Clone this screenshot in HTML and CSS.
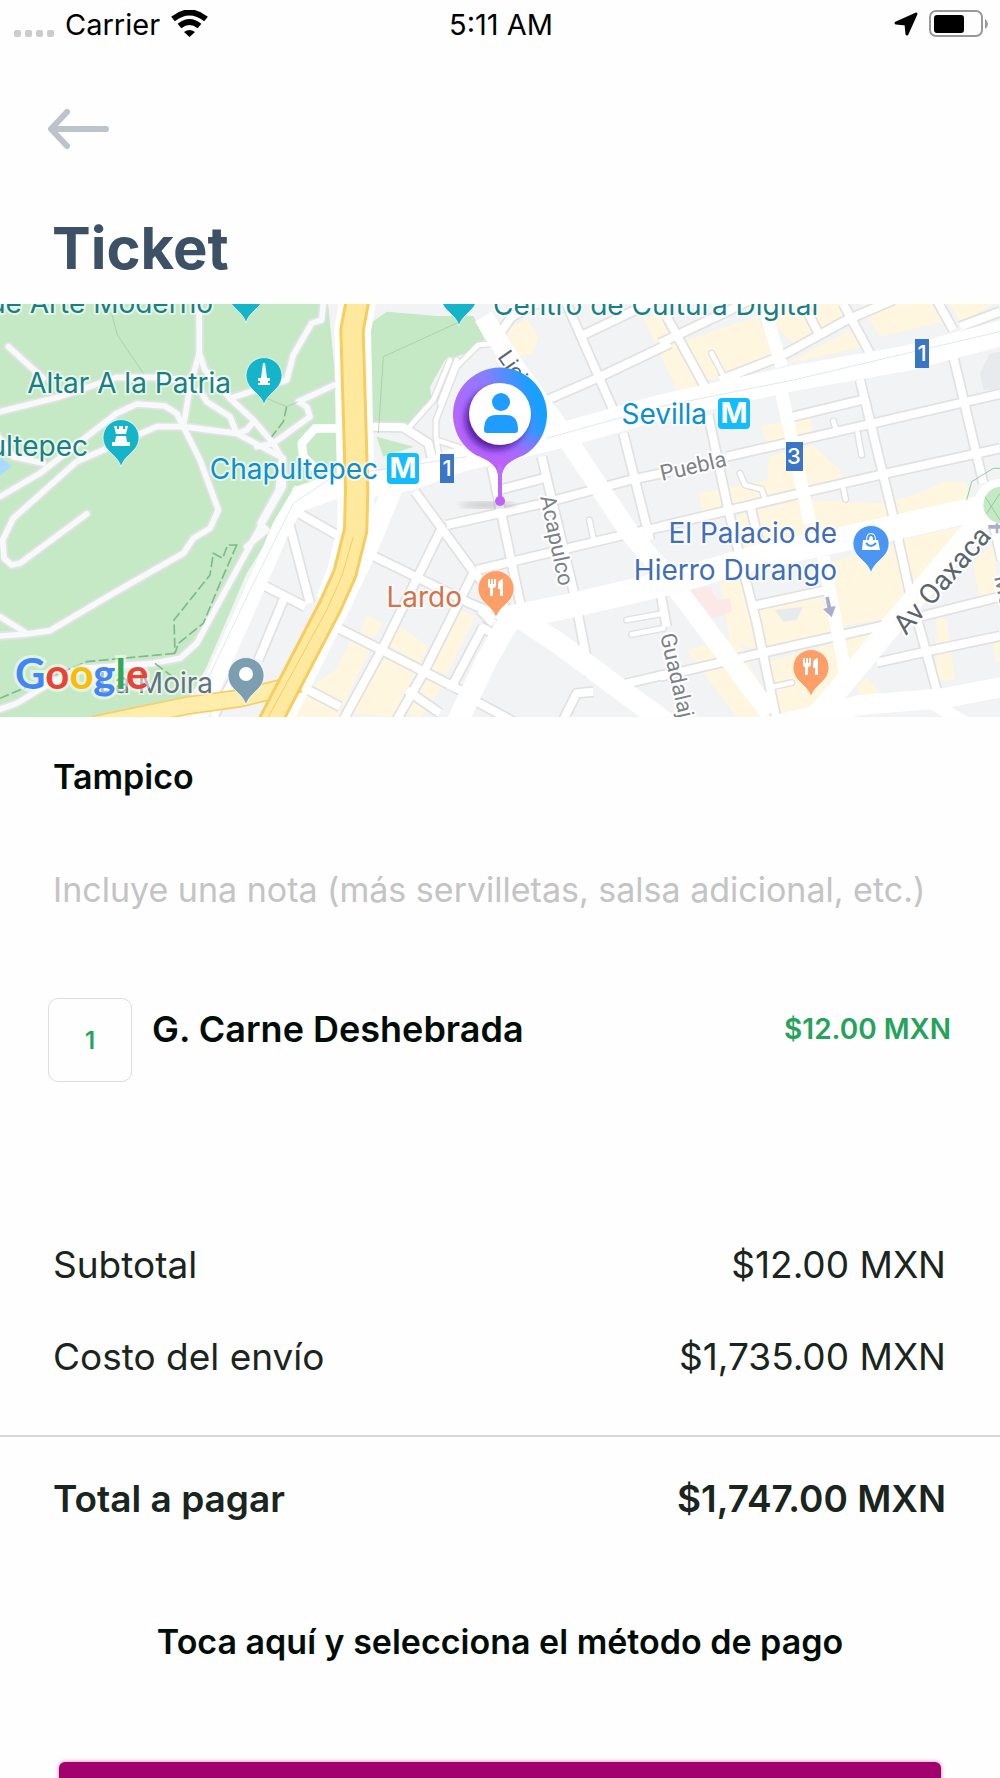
FILE: index.html
```
<!DOCTYPE html>
<html lang="es">
<head>
<meta charset="utf-8">
<meta name="viewport" content="width=device-width, initial-scale=1">
<title>Ticket</title>
<link rel="stylesheet" href="styles.css">
</head>
<body>

    <div id="screen">

        <div class="status-bar">
            <div class="status-left">
                <div class="signal"><i></i><i></i><i></i><i></i></div>
                <span>Carrier</span>
                <svg class="wifi" width="37" height="28" viewBox="0 0 37 28">
                    <path d="M2 9 Q18.500 -4 35 9" fill="none" stroke="#000" stroke-width="6"/>
                    <path d="M8.500 16 Q18.500 8 28.500 16" fill="none" stroke="#000" stroke-width="6"/>
                    <path d="M13 22 Q18.500 18 24 22 L18.500 27 Z"/>
                </svg>
            </div>
            <span class="time">5:11 AM</span>
            <div class="status-right">
                <svg width="24" height="24" viewBox="0 0 24 24">
                    <path d="M2 11 L22 2 L13 22 L12 12 Z" stroke="#000" stroke-width="3" stroke-linejoin="round"/>
                </svg>
                <svg width="59" height="28" viewBox="0 0 59 28">
                    <rect x="1" y="1" width="52" height="25" rx="6" fill="none" stroke="#999" stroke-width="2"/>
                    <rect x="5" y="5" width="30" height="18" rx="3"/>
                    <path d="M56 9 Q59 11 59 14 Q59 17 56 19 Z" fill="#999"/>
                </svg>
            </div>
        </div>

        <div class="header">
            <button class="back" aria-label="Regresar">
                <svg width="61" height="40" viewBox="0 0 61 40">
                    <path d="M58 20 H4 M19 3 L3 20 L19 37" fill="none" stroke="#bcc3ca" stroke-width="6" stroke-linecap="round" stroke-linejoin="round"/>
                </svg>
            </button>
            <h1>Ticket</h1>
        </div>

        <svg class="map" viewBox="0 0 1000 413" preserveAspectRatio="xMidYMid slice">
            <defs>
                <path id="pin" d="M0 30 C-2 23 -6 20 -13 13 A18 18 0 1 1 13 13 C6 20 2 23 0 30 Z"/>
                <linearGradient id="marker-fill" x1="0" y1="0.700" x2="1" y2="0.300">
                    <stop offset="0" stop-color="#c25fff"/>
                    <stop offset="0.500" stop-color="#8a7dff"/>
                    <stop offset="0.900" stop-color="#16a0ff"/>
                </linearGradient>
                <linearGradient id="marker-tail" x1="0" y1="0" x2="0" y2="1">
                    <stop offset="0.600" stop-color="#b45fff" stop-opacity="0"/>
                    <stop offset="0.900" stop-color="#bd60fb"/>
                </linearGradient>
                <filter id="blur"><feGaussianBlur stdDeviation="3"/></filter>

                <!-- park paths -->
                <g id="paths" fill="none" stroke-linecap="round" stroke-linejoin="round">
                    <path d="M25 170 L130 265 M0 365 L180 320 L350 262 L470 262 L560 270"/>
                    <path d="M0 620 L120 550 L350 370 L410 342 L495 348 L530 370 L550 412"/>
                    <path d="M-20 420 L40 500 L130 520 M0 980 L80 1030"/>
                    <path d="M597 42 L598 190 L570 290 L550 410 L600 510 L655 660 L630 715 L580 745 L550 790 L340 910 L150 1022 L80 1032 L0 1038"/>
                    <path d="M550 410 L470 410 L230 515 L40 685 L8 750 L12 805 L35 825 L60 820 L260 672"/>
                    <path d="M550 410 L710 430 L850 505 L850 590 L770 730 L650 950 L590 1060 L540 1105 L460 1120 L250 1135 L150 1180 L50 1240 L0 1258"/>
                    <path d="M598 190 L615 240 L690 325 L760 390 L820 460 L845 505 L835 600 L780 700 L800 720 L740 770"/>
                    <path d="M600 300 L620 335 L690 380 L710 430 L740 420 L760 395"/>
                    <path d="M690 325 L860 270 L880 195 L935 100 L965 90 L970 42"/>
                    <path d="M770 470 L820 460 L930 380 L920 350 L895 335 L1003 285"/>
                </g>

                <!-- narrow streets -->
                <g id="streets" fill="none" stroke-linejoin="round">
                    <path d="M880 660 L1020 740 M865 690 L930 940 M770 875 L915 950 M850 930 L775 1110 M915 1195 L1020 1250 M640 1281 L700 1170"/>
                    <g transform="translate(990 0)">
                        <path d="M710 42 L850 360 M510 130 L545 80 L620 42 M750 140 L1020 10 M640 335 L800 265 L1020 160"/>
                        <path d="M635 500 L730 900 L780 1160 M880 430 L960 750 M485 530 L520 700 L575 960 M500 602 L640 565"/>
                        <path d="M350 705 L640 640 L900 570 L1020 545 M440 840 L880 735 L1020 705"/>
                        <path d="M255 605 L430 845 L560 990 M335 715 L160 1070 L40 1290 M130 798 L420 940 L560 1000"/>
                        <path d="M15 1010 L145 1075 L410 1210 M430 850 L280 1150 L200 1290 M450 960 L490 1000 M450 1010 L490 1030"/>
                        <path d="M460 1010 L360 1200 M230 1200 L330 1270 M440 1235 L560 1300 M850 1190 L1020 1150 M790 1205 L740 1210 L700 1290"/>
                        <path d="M130 410 L220 412 L295 460 L310 520 M990 900 L1010 1010"/>
                    </g>
                    <g transform="translate(1980 0)">
                        <path d="M20 80 L140 300 M550 42 L630 190 M440 60 L475 130 M830 30 L880 120"/>
                        <path d="M0 160 L200 65 L290 20 M180 270 L360 200 L560 90 L700 30 M900 110 L1020 65"/>
                        <path d="M880 200 L970 580 M600 270 L700 680 L750 910 L830 1200"/>
                        <path d="M145 375 L205 660 L290 1000 L350 1290 M390 382 L625 325"/>
                        <path d="M200 500 L640 400 L1020 312 M0 710 L420 610 L680 550 L1020 475"/>
                        <path d="M272 650 L295 750 M270 950 L490 902 M0 1160 L300 1090 L700 1000 L1020 920"/>
                        <path d="M650 1118 L820 1080 L1020 1038 M1000 700 L1025 810"/>
                    </g>
                </g>

                <!-- dead ends -->
                <g id="stubs" fill="none" stroke-linecap="round" stroke-linejoin="round">
                    <path d="M1768 690 L1780 745 M1880 990 L1990 970 M1895 1033 L1990 1015"/>
                    <path d="M2135 190 L2172 260 M2500 393 L2512 430 M2573 430 L2585 495 M2220 550 L2235 585 L2285 598 L2296 630 M2530 595 L2537 628 M2320 1190 L2375 1178"/>
                    <path d="M1320 520 L1308 440 L1308 390 L1370 230 L1435 165 L1485 160 M1310 450 L1400 480"/>
                    <path d="M1300 330 L1350 210 M1320 340 L1370 210 M1300 330 L1220 420"/>
                </g>

                <!-- avenues -->
                <g id="avenues" fill="none" stroke-linejoin="round">
                    <path stroke-width="76" d="M3010 128 L2720 205 L2380 265 L1980 352 L1690 435 L1390 505 L1240 560 L1150 580 L1000 590 L890 630"/>
                    <path stroke-width="56" d="M910 600 L845 710 L750 930 L660 1130 L590 1290"/>
                    <path stroke-width="58" d="M1450 80 L1550 240 L1700 445 L1890 730 L2010 870 L2310 1270"/>
                    <path stroke-width="74" d="M1500 990 L1720 945 L2000 880 L2280 800 L2540 745 L2940 655"/>
                    <path stroke-width="64" d="M2950 680 L2680 1000 L2540 1170 L2430 1300"/>
                    <path stroke-width="64" d="M1540 970 L1460 1110 L1370 1300 M1540 970 L1690 1070 L1850 1190 L2000 1300"/>
                    <path stroke-width="60" d="M2310 1310 L2580 1245 L2830 1225 L3010 1190"/>
                    <path stroke-width="38" d="M2290 42 L2345 230 M2345 310 L2430 700 M2470 800 L2540 1170 M2780 1230 L2900 1300"/>
                    <path stroke-width="60" d="M1180 590 L1110 760 L1010 970 L850 1290"/>
                    <path stroke-width="110" d="M1073 30 L1058 120 L1068 600 L1067 720 L1035 850 L1000 940"/>
                    <path stroke-width="26" d="M1020 415 L945 415 L905 460 L910 500 L960 550"/>
                </g>
            </defs>

            <g transform="translate(0 -14) scale(0.333333)">
                <path fill="#f1f3f4" d="M0 0 H3000 V1300 H0 Z"/>
                <path fill="#c5e8c5" d="M0 0 H980 L1003 230 L1010 560 L890 610 L740 850 L620 1130 L560 1240 L290 1290 L0 1290 Z"/>
                <path fill="#c5e8c5" d="M1105 105 L1160 65 L1310 78 L1420 78 L1455 150 L1420 165 L1400 190 L1335 210 L1290 290 L1295 335 L1220 408 L1105 400 Z M1130 440 L1240 470 L1150 500 Z"/>
                <path fill="#a9daff" d="M0 500 L35 528 L0 558 Z"/>

                <!-- commercial blocks -->
                <g fill="#fef6df">
                    <path d="M1520 120 L1580 85 L1615 140 L1600 190 L1550 200 Z M1100 975 L1150 1000 L1120 1045 L1080 1030 Z M1205 1010 L1285 1070 L1260 1120 L1155 1060 Z"/>
                    <path d="M1050 1050 L1110 1080 L1030 1245 L960 1240 Z M1130 1090 L1245 1150 L1180 1281 L1050 1270 Z M1380 960 L1425 980 L1340 1155 L1290 1135 Z"/>
                    <path d="M1280 1165 L1325 1190 L1300 1230 L1255 1210 Z M1230 1235 L1285 1260 L1260 1281 L1215 1270 Z M930 1190 L1020 1130 V1281 H880 Z"/>
                    <path d="M1930 80 L1990 80 L2100 290 L2030 300 Z M2060 150 L2270 80 L2330 190 L2190 265 L2110 270 Z M2290 42 H2540 L2570 90 L2380 160 L2330 110 Z"/>
                    <path d="M2360 220 L2570 110 L2600 170 Z M2580 42 H2800 L2830 95 L2640 140 Z M2850 42 H2980 L2880 100 Z"/>
                    <path d="M2285 405 L2430 385 L2440 430 L2300 460 Z M2305 500 L2440 465 L2520 540 L2530 590 L2260 640 L2105 665 L2095 610 L2305 570 Z"/>
                    <path d="M2190 680 L2400 630 L2660 640 L2780 600 L2840 570 L2900 580 L2910 640 L2540 720 L2210 790 Z M2480 820 L2920 700 L2720 910 L2700 980 L2520 1010 Z"/>
                    <path d="M2250 960 L2460 910 L2500 1030 L2290 1080 Z M2290 1120 L2500 1060 L2520 1170 L2450 1250 L2340 1275 Z M2060 1080 L2210 1040 L2330 1281 H2210 Z M2160 880 L2230 870 L2270 1080 L2190 1050 Z"/>
                    <path d="M2810 980 L2840 990 L2865 1170 L2810 1170 Z M2920 820 L2980 760 L3000 930 L2940 940 Z M2980 1050 H3000 V1115 H2985 Z M2540 1050 L2650 1020 L2550 1140 Z M2700 750 L2880 710 L2730 890 Z M2570 1190 L2600 1160 L2650 1225 L2590 1235 Z"/>
                </g>
                <path fill="#fce8e6" d="M2070 900 L2130 890 L2150 930 L2190 925 L2195 965 L2140 985 Z"/>
                <path fill="#e8ebee" d="M2325 960 L2410 950 L2390 990 L2350 995 Z M2940 250 L2970 190 L3000 185 V300 H2950 Z"/>

                <use href="#paths" stroke="#e0e3e1" stroke-width="28"/>
                <use href="#paths" stroke="#f8f9fb" stroke-width="17"/>

                <use href="#streets" stroke="#e1e1e1" stroke-width="34"/>
                <use href="#stubs" stroke="#e1e1e1" stroke-width="22"/>
                <use href="#avenues" stroke="#fff"/>
                <use href="#streets" stroke="#fff" stroke-width="24"/>
                <use href="#stubs" stroke="#fff" stroke-width="14"/>

                <g fill="none" stroke="#7dbb88" stroke-width="5" stroke-dasharray="30 10">
                    <path d="M710 765 L660 880 L610 1000 L535 1060 L525 1090 L522 990 L630 855 L640 790 L668 805 L683 765 Z"/>
                    <path d="M525 1090 L260 1115 L130 1170 L0 1225 M860 350 L850 395 L815 440 M465 1120 L530 1170"/>
                </g>
                <path fill="none" stroke="#9dc6a5" stroke-width="2" d="M335 70 L352 135 L430 250 M800 325 L860 350 L895 335 M1380 95 L1150 200 L1135 430"/>
                <path fill="none" stroke="#dfe9f0" stroke-width="3" d="M3000 125 L2720 190 L2380 270 L1980 350 L1640 445 M1400 500 L1000 560 L880 640 L750 900 L570 1281"/>

                <path fill="none" stroke="#f8cf64" stroke-width="56" d="M280 1305 L560 1247 L720 1225 L900 1180"/>
                <path fill="none" stroke="#ffeeab" stroke-width="46" d="M280 1305 L560 1247 L720 1225 L900 1180"/>
                <path fill="none" stroke="#f7cd60" stroke-width="76" stroke-linejoin="round" d="M1073 30 L1056 120 L1070 600 L1067 720 L1035 850 L990 950 L808 1300"/>
                <path fill="none" stroke="#ffe99e" stroke-width="58" stroke-linejoin="round" d="M1073 30 L1056 120 L1070 600 L1067 720 L1035 850 L990 950 L808 1300"/>
                <path fill="none" stroke="#f7cd60" stroke-width="3" d="M1060 740 L1025 860 L980 960 L800 1290"/>

                <!-- roundabout -->
                <circle cx="3000" cy="645" r="78" fill="#fff"/>
                <circle cx="3005" cy="645" r="55" fill="#c5e8c5"/>
                <path fill="none" stroke="#8fcf9a" stroke-width="3" d="M2900 630 L2915 575 L2980 535 H3000 M2955 620 L3000 690 M2960 670 L3000 610"/>
                <path fill="#a9aece" d="M2476 922 L2487 920 L2493 950 L2507 948 L2495 982 L2469 957 L2482 953 Z M2965 705 H3000 V716 H2965 Z M2987 700 H2995 V730 H2987 Z"/>
            </g>

            <g class="road-label">
                <text transform="translate(497 53) rotate(55)" class="dark">Lieja</text>
                <text transform="translate(662 177) rotate(-13)">Puebla</text>
                <text transform="translate(540 193) rotate(78)">Acapulco</text>
                <text transform="translate(660 331) rotate(77)">Guadalajara</text>
                <text transform="translate(994 273) rotate(77)">Monterrey</text>
                <text transform="translate(906 332) rotate(-49)" class="dark avenue">Av Oaxaca</text>
            </g>

            <g class="place-label">
                <text x="213" y="9" text-anchor="end" fill="#178087">de Arte Moderno</text>
                <text x="493" y="11" fill="#178087">Centro de Cultura Digital</text>
                <text x="231" y="89" text-anchor="end" fill="#178087">Altar A la Patria</text>
                <text x="88" y="152" text-anchor="end" fill="#178087">Chapultepec</text>
                <text x="378" y="175" text-anchor="end" fill="#0d8fd0">Chapultepec</text>
                <text x="707" y="120" text-anchor="end" fill="#0d8fd0">Sevilla</text>
                <text x="462" y="303" text-anchor="end" fill="#d2744a">Lardo</text>
                <text x="837" y="239" text-anchor="end" fill="#3f6fb8">El Palacio de</text>
                <text x="837" y="276" text-anchor="end" fill="#3f6fb8">Hierro Durango</text>
                <text x="213" y="389" text-anchor="end" fill="#5e7480">La Moira</text>
            </g>

            <!-- metro -->
            <g class="metro">
                <rect x="387" y="149" width="32" height="31" rx="4" fill="#12bdff"/>
                <text x="403" y="174" class="m">M</text>
                <rect x="718" y="94" width="32" height="31" rx="4" fill="#12bdff"/>
                <text x="734" y="119" class="m">M</text>
                <rect x="440" y="150" width="14" height="29" fill="#3b75c6"/>
                <text x="447" y="172">1</text>
                <rect x="915" y="35" width="14" height="29" fill="#3b75c6"/>
                <text x="922" y="57">1</text>
                <rect x="786" y="138" width="17" height="29" fill="#3b75c6"/>
                <text x="794" y="160">3</text>
            </g>

            <!-- places -->
            <g class="pins">
                <use href="#pin" x="246" y="-11" fill="#16b4c8"/>
                <use href="#pin" x="459" y="-8" fill="#16b4c8"/>
                <use href="#pin" x="264" y="71" fill="#16b4c8"/>
                <use href="#pin" x="121" y="133" fill="#16b4c8"/>
                <use href="#pin" x="496" y="284" fill="#ff9e67"/>
                <use href="#pin" x="811" y="363" fill="#ff9e67"/>
                <use href="#pin" x="871" y="239" fill="#4b96f3"/>
                <use href="#pin" x="246" y="371" fill="#7b9eb0"/>
            </g>
            <g fill="#fff">
                <path d="M263 59 H265 L267 74 H270 V77 H268 V79 H270 V81 H258 V79 H260 V77 H258 V74 H261 Z"/>
                <path d="M114 122 H117 V125 H119 V122 H123 V125 H125 V122 H128 L126 130 H116 Z M116 132 H126 L127 138 H130 V142 H112 V138 H115 Z"/>
                <circle cx="246" cy="370" r="7"/>
                <path id="fork" d="M488 275 H490 V280 H491 V275 H493 V280 H494 V275 H496 V281 Q496 284 493 284 V292 H490 V284 Q488 284 488 281 Z M503 275 V292 H500 V285 H498 V280 Q498 276 503 275 Z"/>
                <use href="#fork" x="315" y="79"/>
                <path d="M863 236 H866 Q866 229 871 229 Q876 229 876 236 H878 L880 246 H862 Z"/>
            </g>
            <path fill="none" stroke="#4b96f3" stroke-width="2" d="M868 236 Q868 231 871 231 Q874 231 874 236 M866 239 Q871 245 876 239"/>

            <!-- delivery marker -->
            <ellipse cx="488" cy="201" rx="28" ry="3" fill="#555" opacity="0.300" filter="url(#blur)"/>
            <path fill="url(#marker-fill)" d="M498 170 C496 160 488 156 476 151 A47 47 0 1 1 524 151 C512 156 504 160 502 170 Z"/>
            <path fill="url(#marker-tail)" d="M498 170 C496 160 488 156 476 151 A47 47 0 1 1 524 151 C512 156 504 160 502 170 Z"/>
            <path fill="none" stroke="#bd6cf8" stroke-width="4" d="M500 160 V195"/>
            <circle cx="500" cy="197" r="5" fill="#bd62fb"/>
            <circle cx="496" cy="115" r="31" fill="#4a1090" opacity="0.800" filter="url(#blur)"/>
            <circle cx="500" cy="110" r="31" fill="#fff"/>
            <circle cx="501" cy="98" r="9" fill="#1f9cff"/>
            <path fill="#1f9cff" d="M484 126 Q484 111 496 111 H506 Q518 111 518 126 Q518 129 515 129 H487 Q484 129 484 126 Z"/>

            <text x="15" y="385" class="google"><tspan fill="#4285f4">G</tspan><tspan fill="#ea4335">o</tspan><tspan fill="#fbbc05">o</tspan><tspan fill="#4285f4">g</tspan><tspan fill="#34a853">l</tspan><tspan fill="#ea4335">e</tspan></text>
        </svg>

        <form class="order">
            <label class="street" for="note">Tampico</label>
            <input type="text" class="note" id="note" placeholder="Incluye una nota (más servilletas, salsa adicional, etc.)">
        </form>

        <div class="item">
            <button class="quantity">1</button>
            <span class="item-name">G. Carne Deshebrada</span>
            <span class="item-price">$12.00 MXN</span>
        </div>

        <dl class="totals">
            <div class="row">
                <dt>Subtotal</dt>
                <dd>$12.00 MXN</dd>
            </div>
            <div class="row">
                <dt>Costo del envío</dt>
                <dd>$1,735.00 MXN</dd>
            </div>
            <div class="row total">
                <dt>Total a pagar</dt>
                <dd>$1,747.00 MXN</dd>
            </div>
        </dl>

        <button class="payment">Toca aquí y selecciona el método de pago</button>
        <button class="confirm" aria-label="Pagar"></button>

    </div>

</body>
</html>
```
FILE: styles.css
```
* {
    box-sizing: border-box;
}

body {
    margin: 0;
    background-color: #fefefe;
    color: #030d08;
    font-family: Inter, "Liberation Sans", sans-serif;
}

button {
    border: none;
    padding: 0;
    background: none;
    color: inherit;
    font-family: inherit;
    cursor: pointer;
}

#screen {
    display: flex;
    flex-direction: column;
    height: 100vh;
    overflow: hidden;
}

#screen > * {
    flex-shrink: 0;
}

/* status bar */

.status-bar {
    display: grid;
    grid-template-columns: 1fr auto 1fr;
    align-items: center;
    height: 48px;
    padding: 0 12px 0 14px;
    color: #000;
    font-size: 29px;
}

.status-left,
.status-right {
    display: flex;
    align-items: center;
    gap: 11px;
}

.status-right {
    justify-content: flex-end;
}

.signal {
    display: flex;
    gap: 4px;
    padding-top: 18px;
}

.signal i {
    width: 7px;
    height: 7px;
    border-radius: 2px;
    background-color: #ccc;
}

/* header */

.header {
    padding: 61px 48px 24px;
}

.back {
    display: block;
    height: 40px;
}

h1 {
    margin: 67px 0 0 4px;
    color: #3d5166;
    font-size: 58px;
    line-height: 64px;
}

/* map */

.map {
    display: block;
    width: 100%;
    height: 413px;
}

.map text {
    paint-order: stroke;
}

.place-label {
    font-size: 28px;
    stroke: rgba(255, 255, 255, 0.6);
    stroke-width: 4px;
    stroke-linejoin: round;
}

.road-label {
    font-family: Roboto, "Liberation Sans", sans-serif;
    font-size: 22px;
    fill: #7c8286;
    stroke: #fff;
    stroke-width: 4px;
    stroke-linejoin: round;
}

.road-label .dark {
    fill: #59666c;
}

.road-label .avenue {
    font-size: 28px;
}

.metro {
    fill: #fff;
    font-size: 22px;
    font-weight: 500;
    text-anchor: middle;
}

.metro .m {
    font-size: 29px;
    font-weight: bold;
}

.pins {
    stroke: rgba(255, 255, 255, 0.7);
    stroke-width: 1px;
}

.google {
    font-family: Lato, sans-serif;
    font-size: 42px;
    font-weight: bold;
    stroke: rgba(255, 255, 255, 0.5);
    stroke-width: 6px;
}

/* order */

.order {
    display: flex;
    flex-direction: column;
    gap: 68px;
    padding: 38px 53px 0;
}

.street {
    font-size: 34px;
    font-weight: 600;
    line-height: 44px;
}

.note {
    width: 100%;
    height: 44px;
    border: none;
    padding: 0;
    background: none;
    font-family: inherit;
    font-size: 34px;
    outline: none;
}

.note::placeholder {
    color: #c4c4c4;
}

.item {
    display: flex;
    padding: 87px 49px 0 48px;
    line-height: 44px;
}

.quantity {
    width: 84px;
    height: 84px;
    border: 1px solid #ddd;
    border-radius: 10px;
    color: #25a35b;
    font-size: 24px;
    font-weight: 600;
}

.item-name {
    flex: 1;
    padding: 9px 0 0 20px;
    font-size: 36px;
    font-weight: 600;
}

.item-price {
    padding-top: 9px;
    color: #25a35b;
    font-size: 28px;
    font-weight: 600;
}

/* totals */

.totals {
    margin: 161px 0 0;
    color: #1a2520;
    font-size: 37px;
    line-height: 44px;
}

.row {
    display: flex;
    justify-content: space-between;
    padding: 0 54px 0 53px;
}

.row + .row {
    margin-top: 48px;
}

.row dd {
    margin: 0;
}

.row + .total {
    margin-top: 56px;
    border-top: 2px solid #d8d8d8;
    padding-top: 40px;
    font-weight: 600;
}

.payment {
    margin-top: 99px;
    font-size: 34px;
    font-weight: 600;
    line-height: 44px;
}

.confirm {
    height: 96px;
    margin: 98px 59px 0;
    border-radius: 6px;
    background-color: #a2006d;
    box-shadow: 0 0 4px rgba(162, 0, 109, 0.5);
}
```
